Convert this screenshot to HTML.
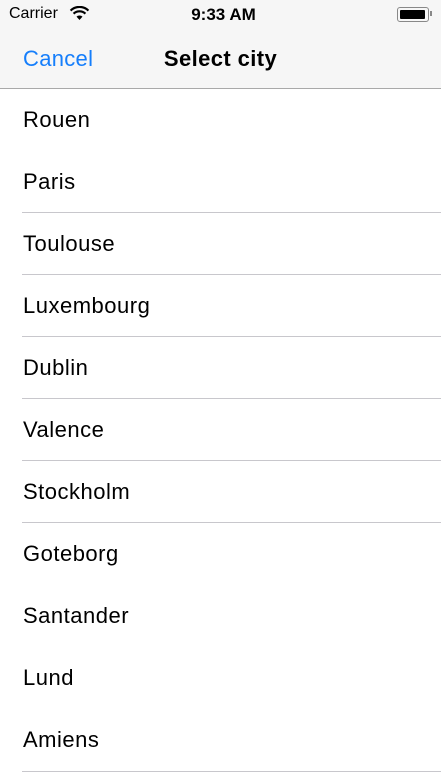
<!DOCTYPE html>
<html><head><meta charset="utf-8"><style>
body{margin:0;width:441px;height:784px;overflow:hidden;background:#fff;font-family:"Liberation Sans",sans-serif;position:relative}
.nav{position:absolute;left:0;top:0;width:441px;height:88px;background:#f6f6f6;border-bottom:1px solid #a9a9a9}
.t{position:absolute;white-space:nowrap}
.row{position:absolute;left:23px;font-size:22px;letter-spacing:0.5px;color:#000;line-height:24px}
.sep{position:absolute;left:22px;right:0;height:1px;background:#c8c7cc}
</style></head><body>
<div class="nav">
<div class="t" style="left:9px;top:5px;font-size:16px">Carrier</div>
<svg style="position:absolute;left:69px;top:6px" width="21" height="15" viewBox="0 0 21 15"><path d="M10.5 14 L7.5 10.6 A4.5 4.5 0 0 1 13.5 10.6 Z" fill="#000"/><path d="M4.6 7.7 A8.5 8.5 0 0 1 16.4 7.7" stroke="#000" stroke-width="2.2" fill="none"/><path d="M1.6 4.6 A12.6 12.6 0 0 1 19.4 4.6" stroke="#000" stroke-width="2.2" fill="none"/></svg>
<div class="t" style="left:0;width:447px;text-align:center;top:5px;font-size:17px;font-weight:bold">9:33 AM</div>
<div style="position:absolute;left:397px;top:7px;width:30px;height:13px;border:1px solid #888;border-radius:3px"><div style="position:absolute;left:2px;top:2px;width:25px;height:9px;background:#000;border-radius:1px"></div></div>
<div style="position:absolute;left:430px;top:11px;width:2px;height:5px;background:#888"></div>
<div class="t" style="left:23px;top:46px;font-size:22px;letter-spacing:0.3px;color:#157efb">Cancel</div>
<div class="t" style="left:0;width:441px;text-align:center;top:46px;font-size:22px;letter-spacing:0.4px;font-weight:bold">Select city</div>
</div>
<div class="row" style="top:108px">Rouen</div>
<div class="row" style="top:170px">Paris</div>
<div class="sep" style="top:212px"></div>
<div class="row" style="top:232px">Toulouse</div>
<div class="sep" style="top:274px"></div>
<div class="row" style="top:294px">Luxembourg</div>
<div class="sep" style="top:336px"></div>
<div class="row" style="top:356px">Dublin</div>
<div class="sep" style="top:398px"></div>
<div class="row" style="top:418px">Valence</div>
<div class="sep" style="top:460px"></div>
<div class="row" style="top:480px">Stockholm</div>
<div class="sep" style="top:522px"></div>
<div class="row" style="top:542px">Goteborg</div>
<div class="row" style="top:604px">Santander</div>
<div class="row" style="top:666px">Lund</div>
<div class="row" style="top:728px">Amiens</div>
<div class="sep" style="top:771px"></div>
</body></html>
